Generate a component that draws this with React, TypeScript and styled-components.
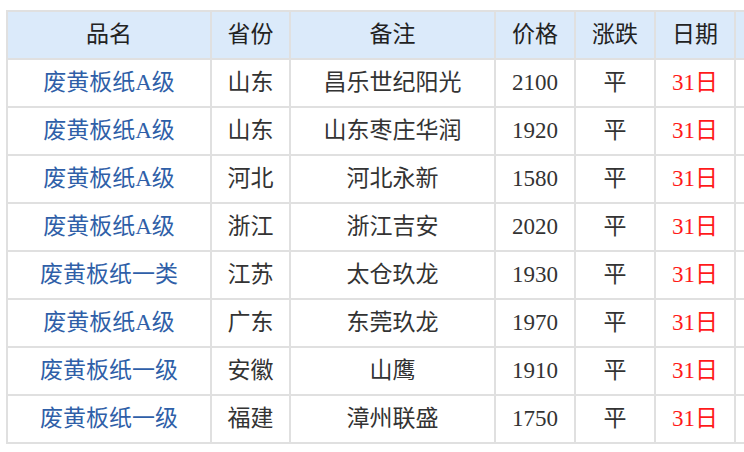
import styled, { createGlobalStyle } from "styled-components";

const GlobalStyle = createGlobalStyle`
  html, body {
    margin: 0;
    padding: 0;
    background: #ffffff;
    overflow: hidden;
  }
`;

const Page = styled.div`
  padding: 10px 0 0 6px;
  font-family: "Liberation Serif", "Noto Sans CJK SC", serif;
  font-size: 23px;
  line-height: 1.2;
`;

const Table = styled.table`
  border-collapse: collapse;
  table-layout: fixed;
  width: 810px;
`;

const HeadCell = styled.th`
  height: 46px;
  padding: 0;
  border: 2px solid #e0e0e0;
  background: #dbeafa;
  color: #222;
  font-weight: normal;
  text-align: center;
`;

type Tone = "link" | "plain" | "date";

const toneColor: Record<Tone, string> = {
  link: "#2f5fa8",
  plain: "#333333",
  date: "#ff1a1a",
};

const Cell = styled.td<{ $tone?: Tone }>`
  height: 45px;
  padding: 0 0 1px;
  border: 2px solid #e0e0e0;
  text-align: center;
  white-space: nowrap;
  color: ${(p) => toneColor[p.$tone ?? "plain"]};
`;

const columns = [
  { title: "品名", width: 204 },
  { title: "省份", width: 79 },
  { title: "备注", width: 205 },
  { title: "价格", width: 80 },
  { title: "涨跌", width: 80 },
  { title: "日期", width: 80 },
  { title: "", width: 82 },
];

const rows = [
  ["废黄板纸A级", "山东", "昌乐世纪阳光", "2100"],
  ["废黄板纸A级", "山东", "山东枣庄华润", "1920"],
  ["废黄板纸A级", "河北", "河北永新", "1580"],
  ["废黄板纸A级", "浙江", "浙江吉安", "2020"],
  ["废黄板纸一类", "江苏", "太仓玖龙", "1930"],
  ["废黄板纸A级", "广东", "东莞玖龙", "1970"],
  ["废黄板纸一级", "安徽", "山鹰", "1910"],
  ["废黄板纸一级", "福建", "漳州联盛", "1750"],
];

export default function App() {
  return (
    <Page>
      <GlobalStyle />
      <Table>
        <colgroup>
          {columns.map((c, i) => (
            <col key={i} style={{ width: c.width }} />
          ))}
        </colgroup>
        <thead>
          <tr>
            {columns.map((c, i) => (
              <HeadCell key={i}>{c.title}</HeadCell>
            ))}
          </tr>
        </thead>
        <tbody>
          {rows.map(([name, province, note, price], i) => (
            <tr key={i}>
              <Cell $tone="link">{name}</Cell>
              <Cell>{province}</Cell>
              <Cell>{note}</Cell>
              <Cell>{price}</Cell>
              <Cell>平</Cell>
              <Cell $tone="date">31日</Cell>
              <Cell />
            </tr>
          ))}
        </tbody>
      </Table>
    </Page>
  );
}
